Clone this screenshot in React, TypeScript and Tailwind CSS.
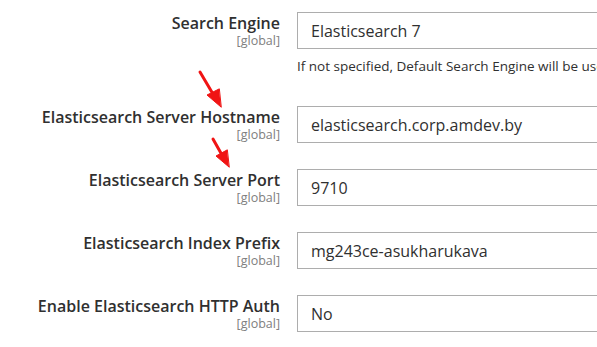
export default function App() {
  const rows = [
    { label: "Elasticsearch Server Hostname", value: "elasticsearch.corp.amdev.by" },
    { label: "Elasticsearch Server Port", value: "9710" },
    { label: "Elasticsearch Index Prefix", value: "mg243ce-asukharukava" },
    { label: "Enable Elasticsearch HTTP Auth", value: "No" },
  ];

  return (
    <div
      className="relative w-[597px] h-[347px] overflow-hidden bg-white text-[#303030]"
      style={{ fontFamily: '"Open Sans", sans-serif' }}
    >
      <div className="flex flex-col pt-[12px]">
        {/* Search engine row with note */}
        <div className="flex">
          <div className="w-[280px] shrink-0 text-right pt-[1px]">
            <div className="text-[16px] font-semibold leading-[20px]">Search Engine</div>
            <div className="text-[12.5px] leading-[14px] text-[#808080] mt-[1px]">[global]</div>
          </div>
          <div className="ml-[17px] shrink-0">
            <div className="w-[360px] h-[37px] border border-[#adadad] pl-[13px] flex items-center text-[16px]">
              Elasticsearch 7
            </div>
            <div className="text-[13.5px] leading-[18px] mt-[8px] whitespace-nowrap">
              If not specified, Default Search Engine will be used.
            </div>
          </div>
        </div>

        <div className="flex flex-col gap-[26px] mt-[31px]">
          {rows.map((r) => (
            <div key={r.label} className="flex">
              <div className="w-[280px] shrink-0 text-right pt-[1px]">
                <div className="text-[16px] font-semibold leading-[20px]">{r.label}</div>
                <div className="text-[12.5px] leading-[14px] text-[#808080] mt-[1px]">[global]</div>
              </div>
              <div className="ml-[17px] shrink-0">
                <div className="w-[360px] h-[37px] border border-[#adadad] pl-[13px] flex items-center text-[16px]">
                  {r.value}
                </div>
              </div>
            </div>
          ))}
        </div>
      </div>

      {/* red annotation arrows */}
      <svg className="absolute left-0 top-0 pointer-events-none" width="597" height="347">
        <g fill="#f01414" stroke="#f01414" strokeWidth="3" strokeLinecap="round">
          <line x1="200" y1="72" x2="213" y2="94" />
          <polygon points="221,107 207,95 219,89" strokeWidth="1" />
          <line x1="213" y1="139" x2="222" y2="155" />
          <polygon points="229,167 216,156 227,150" strokeWidth="1" />
        </g>
      </svg>
    </div>
  );
}
